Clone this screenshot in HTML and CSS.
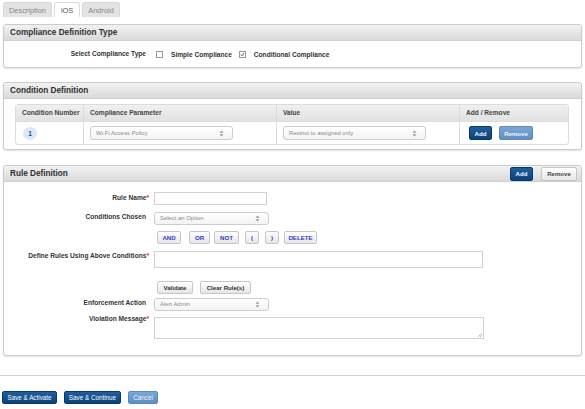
FILE: index.html
```html
<!DOCTYPE html>
<html>
<head>
<meta charset="utf-8">
<link rel="stylesheet" href="styles.css">
</head>
<body>
<div class="page">
  <div class="tabs">
    <div class="tab">Description</div>
    <div class="tab active">iOS</div>
    <div class="tab">Android</div>
  </div>

  <div class="panel p1">
    <div class="panel-head"><span class="title">Compliance Definition Type</span></div>
    <div class="panel-body type-body">
      <div class="label plain">Select Compliance Type</div>
      <div class="choices">
        <span class="cb"></span><span class="choice">Simple Compliance</span>
        <span class="cb checked"><svg width="7" height="7" viewBox="0 0 7 7"><path d="M1.2 3.6 L2.8 5.3 L5.9 1.2" fill="none" stroke="#222" stroke-width="1.1"/></svg></span><span class="choice">Conditional Compliance</span>
      </div>
    </div>
  </div>

  <div class="panel p2">
    <div class="panel-head"><span class="title">Condition Definition</span></div>
    <div class="panel-body cond-body">
      <div class="ctable">
        <div class="th">Condition Number</div>
        <div class="th">Compliance Parameter</div>
        <div class="th">Value</div>
        <div class="th last">Add / Remove</div>
        <div class="td"><span class="num">1</span></div>
        <div class="td"><div class="select sel-param">Wi-Fi Access Policy<svg class="arr" width="5" height="7" viewBox="0 0 5 7"><path d="M2.5 0.5 L4.5 2.8 L0.5 2.8Z M2.5 6.5 L4.5 4.2 L0.5 4.2Z" fill="#999"/></svg></div></div>
        <div class="td"><div class="select sel-param">Restrict to assigned only<svg class="arr" width="5" height="7" viewBox="0 0 5 7"><path d="M2.5 0.5 L4.5 2.8 L0.5 2.8Z M2.5 6.5 L4.5 4.2 L0.5 4.2Z" fill="#999"/></svg></div></div>
        <div class="td last btns"><span class="btn dark b-add">Add</span><span class="btn light b-rem">Remove</span></div>
      </div>
    </div>
  </div>

  <div class="panel p3">
    <div class="panel-head">
      <span class="title">Rule Definition</span>
      <div class="head-btns"><span class="btn dark h-add">Add</span><span class="btn gray h-rem">Remove</span></div>
    </div>
    <div class="panel-body rule-body">
      <div class="row r1">
        <div class="label">Rule Name<span class="req">*</span></div>
        <div class="input i-name"></div>
      </div>
      <div class="row r2">
        <div class="label plain">Conditions Chosen</div>
        <div class="select sel-form">Select an Option<svg class="arr" width="5" height="7" viewBox="0 0 5 7"><path d="M2.5 0.5 L4.5 2.8 L0.5 2.8Z M2.5 6.5 L4.5 4.2 L0.5 4.2Z" fill="#999"/></svg></div>
      </div>
      <div class="row r3">
        <div class="label"></div>
        <div class="logic">
          <span class="btn gray blue w-and">AND</span>
          <span class="btn gray blue w-or">OR</span>
          <span class="btn gray blue w-not">NOT</span>
          <span class="btn gray blue w-par">(</span>
          <span class="btn gray blue w-par">)</span>
          <span class="btn gray blue w-del">DELETE</span>
        </div>
      </div>
      <div class="row r4">
        <div class="label">Define Rules Using Above Conditions<span class="req">*</span></div>
        <div class="input i-define"></div>
      </div>
      <div class="row r5">
        <div class="label"></div>
        <div class="logic">
          <span class="btn gray w-val">Validate</span>
          <span class="btn gray w-clr">Clear Rule(s)</span>
        </div>
      </div>
      <div class="row r6">
        <div class="label plain">Enforcement Action</div>
        <div class="select sel-form">Alert Admin<svg class="arr" width="5" height="7" viewBox="0 0 5 7"><path d="M2.5 0.5 L4.5 2.8 L0.5 2.8Z M2.5 6.5 L4.5 4.2 L0.5 4.2Z" fill="#999"/></svg></div>
      </div>
      <div class="row r7">
        <div class="label">Violation Message<span class="req">*</span></div>
        <div class="input i-msg"><svg class="grip" width="6" height="6" viewBox="0 0 6 6"><path d="M5 1 L1 5 M5 3 L3 5" stroke="#aaa" stroke-width="0.8"/></svg></div>
      </div>
    </div>
  </div>
</div>
<div class="rule-line"></div>
<div class="footer">
  <span class="btn dark f-act">Save &amp; Activate</span>
  <span class="btn dark f-cont">Save &amp; Continue</span>
  <span class="btn light f-can">Cancel</span>
</div>
</body>
</html>
```

FILE: styles.css
```css
* { box-sizing: border-box; }
html, body { margin: 0; padding: 0; background: #fff; }
body { font-family: "Liberation Sans", Arial, sans-serif; color: #333; width: 585px; height: 409px; overflow: hidden; }
.page { padding: 2px 3px 0 3px; }

.tabs { display: flex; gap: 2px; height: 15px; }
.tab { height: 15px; padding: 0 5px; font-size: 7.4px; line-height: 15px; color: #858585; background: #e3e3e3; border: 1px solid #d8d8d8; border-bottom: none; border-radius: 3px 3px 0 0; }
.tab.active { background: #fff; color: #555; border-color: #dcdcdc; padding: 0 6px; }

.panel { border: 1px solid #cbcbcb; border-radius: 3px; background: #fff; box-shadow: 0 1px 2px rgba(0,0,0,0.12); }
.p1 { margin-top: 7px; }
.p2 { margin-top: 14px; }
.p3 { margin-top: 15px; }
.panel-head { height: 16px; display: flex; align-items: center; justify-content: space-between; padding: 0 4px 0 6px; background: linear-gradient(#f2f2f2, #dadada); border-bottom: 1px solid #cfcfcf; border-radius: 3px 3px 0 0; }
.title { font-size: 8.2px; font-weight: bold; color: #2e2e2e; }

.label { width: 145px; text-align: right; font-size: 6.6px; font-weight: bold; color: #333; line-height: 10px; white-space: nowrap; }
.label.plain { padding-right: 3px; }
.req { color: #e03030; }

.type-body { height: 26px; display: flex; align-items: center; }
.choices { display: flex; align-items: center; margin-left: 7px; }
.cb { width: 7px; height: 7px; border: 1px solid #9a9a9a; background: #fff; display: inline-flex; align-items: center; justify-content: center; }
.cb svg { display: block; }
.choice { font-size: 6.6px; font-weight: bold; color: #333; margin: 0 7px 0 8px; }

.cond-body { padding: 5px 12px 4px 11px; }
.ctable { display: grid; grid-template-columns: 68px 193px 183px 1fr; border: 1px solid #dcdcdc; border-radius: 3px; }
.th { height: 17px; line-height: 16px; padding-left: 6px; font-size: 6.6px; font-weight: bold; color: #444; background: linear-gradient(#f0f0f0, #e2e2e2); border-right: 1px solid #dcdcdc; border-bottom: 1px solid #dcdcdc; }
.td { height: 22px; padding-left: 6px; display: flex; align-items: center; border-right: 1px solid #dcdcdc; }
.last { border-right: none; }
.num { width: 14px; height: 13px; border-radius: 50%; background: #dbe8f8; color: #1c4d8c; font-size: 6.6px; font-weight: bold; display: flex; align-items: center; justify-content: center; margin-left: 1px; }

.select { position: relative; height: 13px; border: 1px solid #cdcdcd; border-radius: 3px; background: linear-gradient(#ffffff, #f3f3f3); font-size: 5.9px; color: #8a8a8a; line-height: 11px; padding-left: 5px; }
.arr { position: absolute; right: 8px; top: 2px; }
.sel-param { width: 143px; height: 14px; line-height: 12px; }
.sel-param .arr { top: 3px; }
.sel-form { width: 115px; margin-left: 5px; }

.btn { display: inline-flex; align-items: center; justify-content: center; height: 13px; border-radius: 2px; font-size: 6.1px; font-weight: bold; white-space: nowrap; }
.dark { background: linear-gradient(#1f5f9f, #0b4279); border: 1px solid #08386a; color: #fff; }
.light { background: linear-gradient(#7ba7d6, #5d8fc4); border: 1px solid #5b8ac0; color: #f2f6fb; }
.gray { background: linear-gradient(#ffffff, #e6e6e6); border: 1px solid #c6c6c6; color: #333; }
.blue { color: #3434c8; }

.btns { padding-left: 9px; gap: 7px; }
.b-add { width: 23px; height: 14px; }
.b-rem { width: 34px; height: 14px; }

.head-btns { display: flex; gap: 8px; }
.h-add { width: 23px; height: 14px; }
.h-rem { width: 36px; height: 14px; color: #444; }

.rule-body { padding: 10px 0 16px 0; }
.row { display: flex; align-items: flex-start; }
.r2 { margin-top: 7px; }
.r3 { margin-top: 6px; }
.r4 { margin-top: 7px; }
.r5 { margin-top: 13px; }
.r6 { margin-top: 4px; }
.r7 { margin-top: 6px; }
.r1 .label { margin-top: 1px; }
.r7 .label { margin-top: -3px; }
.input { position: relative; margin-left: 5px; border: 1px solid #d2d2d2; background: #fff; }
.i-name { width: 113px; height: 13px; }
.i-define { width: 329px; height: 17px; }
.i-msg { width: 330px; height: 22px; }
.grip { position: absolute; right: 0; bottom: 0; }
.logic { display: flex; margin-left: 8px; gap: 7px; }
.w-and { width: 24px; }
.w-or { width: 21px; margin-left: 1px; }
.w-not { width: 25px; margin-left: -3px; }
.w-par { width: 14px; margin-left: -1px; }
.w-del { width: 33px; margin-left: -2px; }
.w-val { width: 36px; }
.w-clr { width: 51px; }

.rule-line { margin-top: 19px; height: 1px; background: #d0d0d0; width: 585px; }
.footer { display: flex; gap: 7px; padding: 15px 0 0 2px; }
.footer .btn { height: 13px; font-weight: normal; font-size: 6.3px; }
.f-act { width: 55px; }
.f-cont { width: 57px; }
.f-can { width: 30px; }
```
